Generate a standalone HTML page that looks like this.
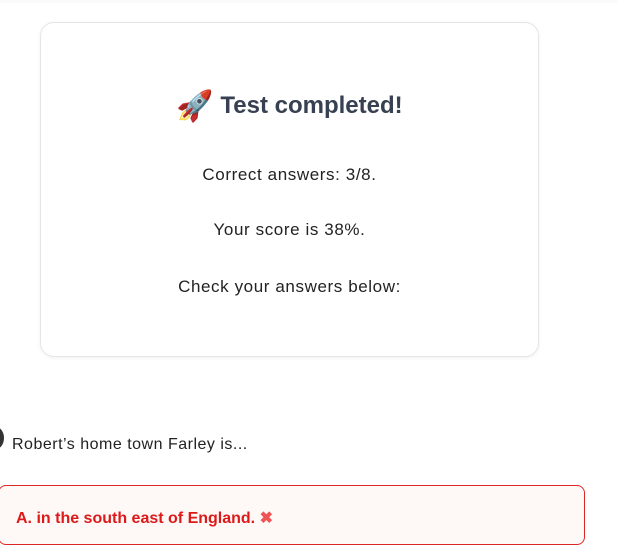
<!DOCTYPE html>
<html><head><style>
body{margin:0;width:617px;height:530px;overflow:hidden;background:#fff;font-family:"Liberation Sans",sans-serif;position:relative}
.card{position:absolute;left:40px;top:22px;width:499px;height:335px;border:1px solid #e5e5e5;border-radius:14px;box-shadow:0 1px 4px rgba(0,0,0,0.06);box-sizing:border-box}
.t{position:absolute;left:0;width:100%;text-align:center;color:#222;font-size:17px;letter-spacing:0.6px}
h1{position:absolute;left:0;width:100%;top:66px;margin:0;text-align:center;font-size:24px;font-weight:bold;color:#374151;line-height:34px}
.q{position:absolute;left:12px;top:436px;font-size:16px;color:#222;letter-spacing:0.5px}
.circ{position:absolute;left:-12px;top:427px;width:16px;height:22px;border-radius:50%;background:#333}
.ans{position:absolute;left:-2px;top:485px;width:587px;height:60px;border:1px solid #dc2626;border-radius:8px;background:#fef8f6;box-sizing:border-box}
.ans span{position:absolute;left:17px;top:22px;font-size:16px;font-weight:bold;color:#dc1a1a}
</style></head><body>
<div style="position:absolute;left:0;top:0;width:617px;height:3px;background:#fafafa"></div>
<div class="card">
<h1><span style="font-family:'Noto Color Emoji','DejaVu Sans',sans-serif;font-size:30px;vertical-align:-3px">🚀</span> Test completed!</h1>
<div class="t" style="top:142px">Correct answers: 3/8.</div>
<div class="t" style="top:197px">Your score is 38%.</div>
<div class="t" style="top:254px">Check your answers below:</div>
</div>
<div class="circ"></div>
<div class="q">Robert’s home town Farley is...</div>
<div class="ans"><span>A. in the south east of England. <span style="position:static;color:#e55;">✖</span></span></div>
</body></html>
